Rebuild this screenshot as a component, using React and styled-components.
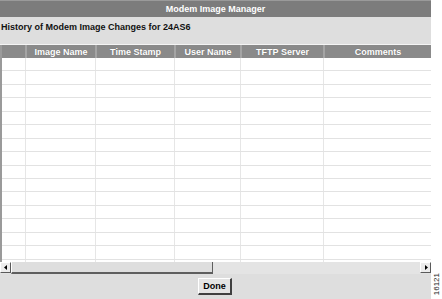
import React from 'react';
import styled, { createGlobalStyle } from 'styled-components';

const GlobalStyle = createGlobalStyle`
  html, body {
    margin: 0;
    padding: 0;
    background: #ffffff;
  }
  body {
    font-family: "Liberation Sans", Arial, sans-serif;
  }
`;

const Page = styled.div`
  display: flex;
  width: 442px;
  height: 299px;
  overflow: hidden;
`;

const Window = styled.div`
  width: 431px;
  height: 299px;
  display: flex;
  flex-direction: column;
  background: #dedede;
`;

const TitleBar = styled.div`
  flex: none;
  height: 17px;
  background: #7c7c7c;
  border-top: 1px solid #9a9a9a;
  box-sizing: border-box;
  color: #ffffff;
  font-weight: bold;
  font-size: 9px;
  display: flex;
  align-items: center;
  justify-content: center;
`;

const Caption = styled.div`
  flex: none;
  height: 28px;
  box-sizing: border-box;
  padding: 5px 0 0 1px;
  font-weight: bold;
  font-size: 9px;
  color: #111111;
  border-bottom: 1px solid #f4f4f4;
`;

const Grid = styled.div`
  flex: 1;
  min-height: 0;
  display: flex;
  flex-direction: column;
  background: #ffffff;
  border-left: 2px solid #9a9a9a;
  overflow: hidden;
`;

const HeaderRow = styled.div`
  flex: none;
  display: grid;
  grid-template-columns: ${p => p.$cols};
  height: 13px;
  background: #8a8a8a;
  margin-left: -2px;
  padding-left: 2px;
`;

const HeaderCell = styled.div`
  color: #ffffff;
  font-weight: bold;
  font-size: 9px;
  display: flex;
  align-items: center;
  justify-content: center;
  border-left: 2px solid #a4a4a4;
  text-shadow: 0 0 1px rgba(0, 0, 0, 0.25);

  &:first-child {
    border-left: none;
  }
`;

const Row = styled.div`
  flex: none;
  display: grid;
  grid-template-columns: ${p => p.$cols};
  height: 13.45px;
  border-bottom: 1px solid #e2e2e2;
  box-sizing: border-box;
`;

const Cell = styled.div`
  border-left: 1px solid #e6e6e6;

  &:first-child {
    border-left: none;
  }
`;

const ScrollBar = styled.div`
  flex: none;
  height: 12px;
  display: flex;
  background: #e2e2e2;
`;

const Arrow = styled.div`
  width: 11px;
  height: 11px;
  background: #ececec;
  border: 1px solid #ffffff;
  border-right-color: #5a5a5a;
  border-bottom-color: #5a5a5a;
  box-sizing: border-box;
  display: flex;
  align-items: center;
  justify-content: center;
`;

const Thumb = styled.div`
  width: 202px;
  background: #dedede;
  border-left: 1px solid #ffffff;
  border-bottom: 2px solid #5e5e5e;
  border-right: 1px solid #5e5e5e;
  box-sizing: border-box;
`;

const Track = styled.div`
  flex: 1;
  background: #e4e4e4;
`;

const Footer = styled.div`
  flex: none;
  height: 25px;
  display: flex;
  align-items: flex-start;
  justify-content: center;
  padding-top: 4px;
  padding-right: 1px;
  box-sizing: border-box;
`;

const Button = styled.button`
  height: 17px;
  width: 34px;
  padding: 0;
  font-family: "Liberation Sans", Arial, sans-serif;
  font-weight: bold;
  font-size: 9px;
  color: #000000;
  background: #e4e4e4;
  border: 1px solid #ffffff;
  border-right: 2px solid #404040;
  border-bottom: 2px solid #404040;
`;

const Side = styled.div`
  flex: 1;
  display: flex;
  align-items: flex-end;
  justify-content: center;
  padding-bottom: 4px;
`;

const FigureId = styled.div`
  writing-mode: vertical-rl;
  transform: rotate(180deg);
  font-size: 8px;
  color: #222222;
  font-family: "Liberation Sans", Arial, sans-serif;
`;

const cols = '23px 70px 79px 66px 83px 1fr';
const headers = ['', 'Image Name', 'Time Stamp', 'User Name', 'TFTP Server', 'Comments'];

function ArrowIcon({ dir }) {
  return (
    <svg width="4" height="5" viewBox="0 0 4 5">
      {dir === 'left'
        ? <polygon points="3,0 3,5 0,2.5" fill="#000" />
        : <polygon points="1,0 1,5 4,2.5" fill="#000" />}
    </svg>
  );
}

export default function App() {
  const rows = Array.from({ length: 16 });
  return (
    <Page>
      <GlobalStyle />
      <Window>
        <TitleBar>Modem Image Manager</TitleBar>
        <Caption>History of Modem Image Changes for 24AS6</Caption>
        <Grid>
          <HeaderRow $cols={cols}>
            {headers.map((h, i) => (
              <HeaderCell key={i}>{h}</HeaderCell>
            ))}
          </HeaderRow>
          {rows.map((_, r) => (
            <Row key={r} $cols={cols}>
              {headers.map((_, c) => <Cell key={c} />)}
            </Row>
          ))}
        </Grid>
        <ScrollBar>
          <Arrow><ArrowIcon dir="left" /></Arrow>
          <Thumb />
          <Track />
          <Arrow><ArrowIcon dir="right" /></Arrow>
        </ScrollBar>
        <Footer>
          <Button>Done</Button>
        </Footer>
      </Window>
      <Side>
        <FigureId>16121</FigureId>
      </Side>
    </Page>
  );
}
